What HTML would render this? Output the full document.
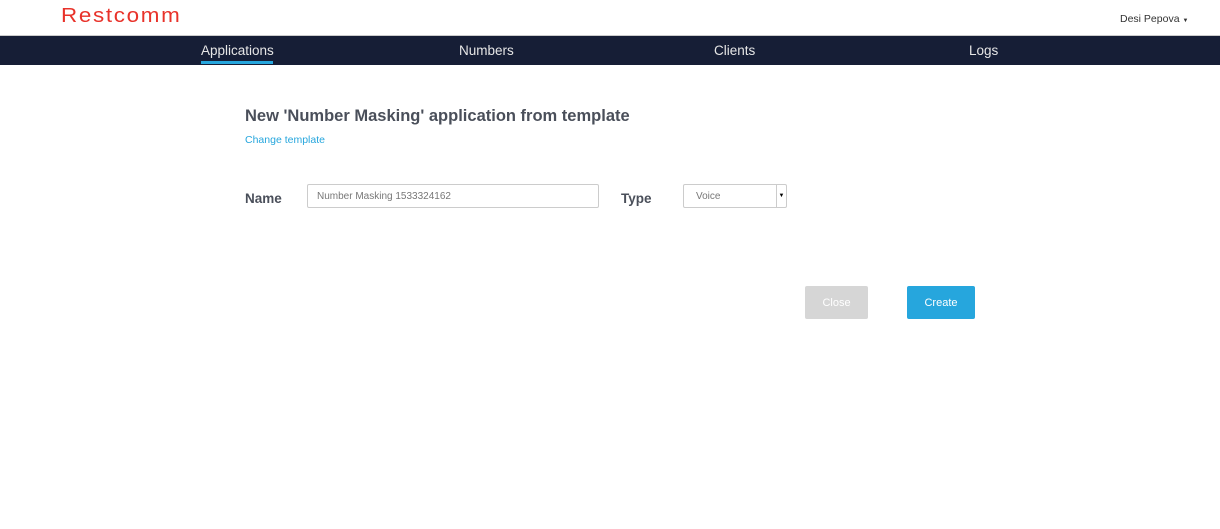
<!DOCTYPE html><html><head><style>
body{margin:0;width:1220px;height:529px;background:#fff;font-family:"Liberation Sans",sans-serif;position:relative;overflow:hidden}
.a{position:absolute}
</style></head><body>
<div class="a" style="left:61px;top:5px;font-size:20px;color:#e8322a;letter-spacing:1.5px;transform:scaleX(1.12);transform-origin:left">Restcomm</div>
<div class="a" style="left:1120px;top:13px;font-size:10.5px;color:#333">Desi Pepova <span style="font-size:6px">▼</span></div>
<div class="a" style="left:0;top:35px;width:1220px;height:29px;background:#161e36;border-top:1px solid #ccc"></div>
<div class="a" style="left:201px;top:43px;font-size:13.5px;color:#e6e6e6">Applications</div>
<div class="a" style="left:201px;top:61px;width:72px;height:3px;background:#26a6dd"></div>
<div class="a" style="left:459px;top:43px;font-size:13.5px;color:#e6e6e6">Numbers</div>
<div class="a" style="left:714px;top:43px;font-size:13.5px;color:#e6e6e6">Clients</div>
<div class="a" style="left:969px;top:43px;font-size:13.5px;color:#e6e6e6">Logs</div>
<div class="a" style="left:245px;top:107px;font-size:16.5px;font-weight:bold;color:#4a4f5a">New 'Number Masking' application from template</div>
<div class="a" style="left:245px;top:134px;font-size:10.5px;color:#26a6dd">Change template</div>
<div class="a" style="left:245px;top:191px;font-size:13.5px;font-weight:bold;color:#4a4f5a">Name</div>
<div class="a" style="left:307px;top:184px;height:22px;border:1px solid #ccc;border-radius:2px;font-size:10px;color:#777;line-height:23px;padding-left:9px;width:281px">Number Masking 1533324162</div>
<div class="a" style="left:621px;top:191px;font-size:13.5px;font-weight:bold;color:#4a4f5a">Type</div>
<div class="a" style="left:683px;top:184px;width:90px;height:22px;border:1px solid #ccc;border-radius:2px;font-size:10px;color:#777;line-height:23px;padding-left:12px">Voice</div>
<div class="a" style="left:776px;top:185px;width:9px;height:22px;border-left:1px solid #ccc;font-size:6px;line-height:22px;text-align:center">▼</div>
<div class="a" style="left:805px;top:286px;width:63px;height:33px;background:#d6d6d6;border-radius:2px;color:#fff;font-size:11px;line-height:34px;text-align:center">Close</div>
<div class="a" style="left:907px;top:286px;width:68px;height:33px;background:#26a6dd;border-radius:2px;color:#fff;font-size:11px;line-height:34px;text-align:center">Create</div>
</body></html>
